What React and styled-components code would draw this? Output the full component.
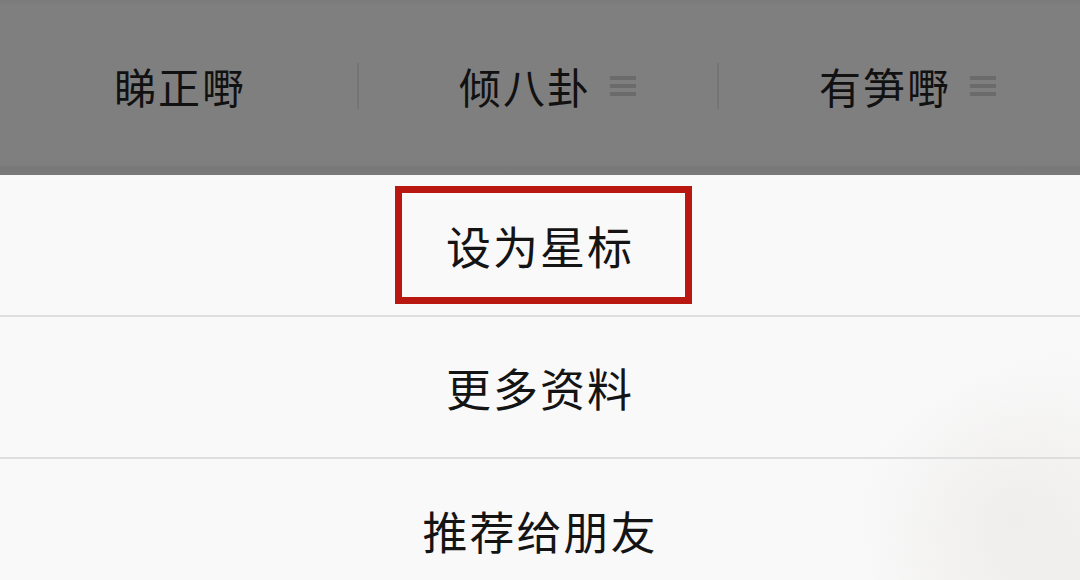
import React from "react";
import styled, { createGlobalStyle } from "styled-components";

const GlobalStyle = createGlobalStyle`
  html, body {
    margin: 0;
    padding: 0;
    width: 1080px;
    height: 580px;
    overflow: hidden;
    background: #f9f9f9;
  }
  body {
    font-family: "Noto Sans CJK SC", "Noto Sans", sans-serif;
  }
`;

const SCPage = styled.div`
  width: 1080px;
  height: 580px;
  display: flex;
  flex-direction: column;
  overflow: hidden;
`;

const SCTabBar = styled.div`
  height: 175px;
  flex-shrink: 0;
  display: grid;
  grid-template-columns: repeat(3, 1fr);
  align-items: center;
  background: linear-gradient(
    to bottom,
    #7b7b7b 0px,
    #7f7f7f 6px,
    #7f7f7f 165px,
    #787878 167px,
    #797979 175px
  );
  padding-bottom: 4px;
  box-sizing: border-box;
`;

const SCTab = styled.div`
  position: relative;
  height: 100%;
  display: flex;
  align-items: center;
  justify-content: center;
  gap: 18px;
  padding-left: ${(props) => (props.menu ? "16px" : "0")};
  font-size: 42px;
  letter-spacing: 2px;
  color: #111;
`;

const SCDivider = styled.span`
  position: absolute;
  left: -3px;
  top: 50%;
  width: 2px;
  height: 46px;
  margin-top: -23px;
  background: #747474;
`;

const SCMenuIcon = styled.svg`
  width: 28px;
  height: 28px;
  flex-shrink: 0;
`;

const SCSheet = styled.div`
  flex: 1;
  display: flex;
  flex-direction: column;
  background:
    radial-gradient(ellipse 200px 320px at 1060px 480px, rgba(232, 228, 225, 0.5), rgba(249, 249, 249, 0) 100%),
    radial-gradient(ellipse 160px 140px at 1010px 340px, rgba(234, 232, 230, 0.45), rgba(249, 249, 249, 0) 100%),
    #f9f9f9;
`;

const SCRow = styled.div`
  height: 142px;
  flex-shrink: 0;
  display: flex;
  align-items: center;
  justify-content: center;
  border-bottom: ${(props) => (props.last ? "none" : "2px solid #dedede")};
  box-sizing: border-box;
  font-size: 45px;
  letter-spacing: 2px;
  color: #141414;
`;

const SCHighlight = styled.div`
  width: 297px;
  height: 118px;
  margin-left: 7px;
  padding-right: 7px;
  box-sizing: border-box;
  border: 7px solid #b8180f;
  display: flex;
  align-items: center;
  justify-content: center;
`;

function MenuIcon() {
  return (
    <SCMenuIcon viewBox="0 0 28 28">
      <rect x="1" y="4" width="26" height="4" fill="#6b6b6b" />
      <rect x="1" y="12" width="26" height="4" fill="#6b6b6b" />
      <rect x="1" y="20" width="26" height="4" fill="#6b6b6b" />
    </SCMenuIcon>
  );
}

const tabs = [
  { label: "睇正嘢", menu: false },
  { label: "倾八卦", menu: true },
  { label: "有笋嘢", menu: true },
];

export default function App() {
  return (
    <SCPage>
      <GlobalStyle />
      <SCTabBar>
        {tabs.map((t, i) => (
          <SCTab key={t.label} menu={t.menu ? 1 : 0}>
            {i > 0 && <SCDivider />}
            <span>{t.label}</span>
            {t.menu && <MenuIcon />}
          </SCTab>
        ))}
      </SCTabBar>
      <SCSheet>
        <SCRow>
          <SCHighlight>设为星标</SCHighlight>
        </SCRow>
        <SCRow>更多资料</SCRow>
        <SCRow last>推荐给朋友</SCRow>
      </SCSheet>
    </SCPage>
  );
}
